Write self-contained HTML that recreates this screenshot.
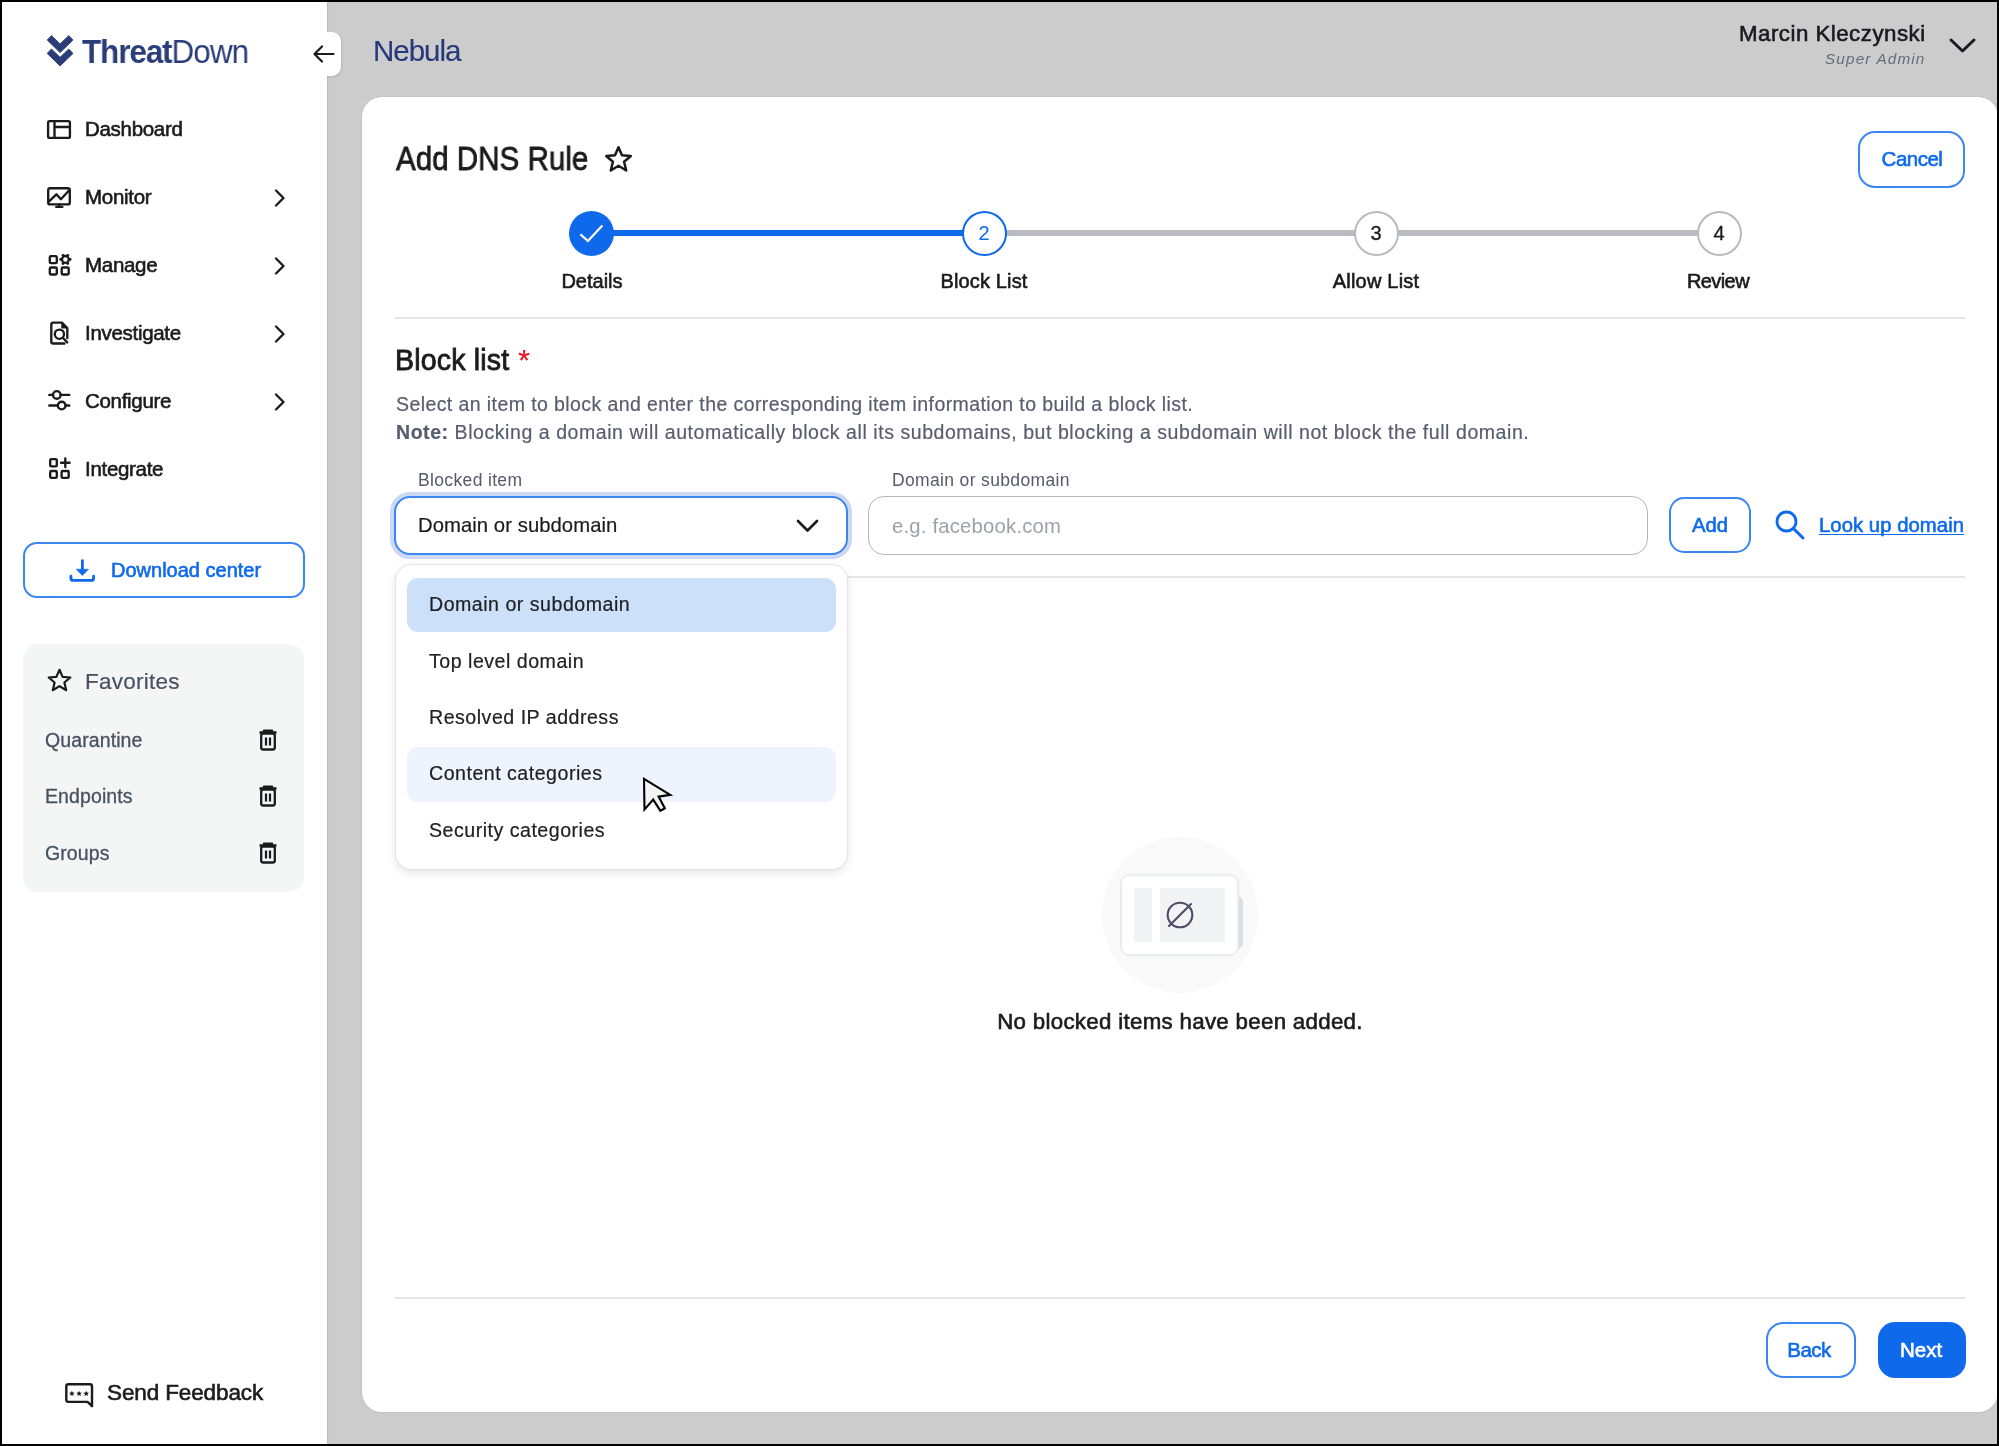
<!DOCTYPE html>
<html><head><meta charset="utf-8"><title>Add DNS Rule</title>
<style>
html,body{margin:0;padding:0;}
body{width:1999px;height:1446px;overflow:hidden;background:#000;position:relative;font-family:"Liberation Sans",sans-serif;}
.t{position:absolute;white-space:nowrap;line-height:1;will-change:transform;}
svg{overflow:visible}
</style></head><body>

<div style="position:absolute;left:2px;top:2px;width:1995px;height:1442px;background:#cccccc;"></div>
<div style="position:absolute;left:2px;top:2px;width:325px;height:1442px;background:#ffffff;box-shadow:1px 0 1px rgba(0,0,0,0.08);"></div>
<svg style="position:absolute;left:40px;top:28px;" width="40" height="44" viewBox="0 0 40 44"><path d="M7.2 12 L11.4 7.6 L20.1 15.9 L28.8 7.6 L33 12 L20.1 24.6 Z" fill="#2b3d78" stroke="#2b3d78" stroke-width="0.9" stroke-linejoin="round"/><path d="M7.2 25.4 L11.4 21 L20.1 29.3 L28.8 21 L33 25.4 L20.1 38 Z" fill="#2b3d78" stroke="#2b3d78" stroke-width="0.9" stroke-linejoin="round"/></svg>
<div class="t" style="top:34.00px;font-size:34px;color:#2b3d78;font-weight:400;left:81.50px;transform:scaleX(0.925);transform-origin:0 0;"><span style="font-weight:700;letter-spacing:-1.2px">Threat</span><span style="letter-spacing:-1px">Down</span></div>
<div style="position:absolute;left:320px;top:32px;width:21px;height:44px;background:#fff;border-radius:0 9px 9px 0;box-shadow:1px 1px 2px rgba(0,0,0,0.12);"></div>
<div style="position:absolute;left:300px;top:30px;width:27px;height:50px;background:#fff;"></div>
<svg style="position:absolute;left:312px;top:45px;" width="23" height="18" viewBox="0 0 23 18"><path d="M21.5 9 H2.5 M10 1.5 L2.5 9 L10 16.5" fill="none" stroke="#1b1b1f" stroke-width="2.2" stroke-linecap="round" stroke-linejoin="round"/></svg>
<div class="t" style="top:119.27px;font-size:20.5px;color:#1b1b1f;font-weight:400;letter-spacing:-0.3px;-webkit-text-stroke:0.6px #1b1b1f;left:84.50px;">Dashboard</div>
<div class="t" style="top:187.27px;font-size:20.5px;color:#1b1b1f;font-weight:400;letter-spacing:-0.3px;-webkit-text-stroke:0.6px #1b1b1f;left:84.50px;">Monitor</div>
<svg style="position:absolute;left:274px;top:188.7px;" width="12" height="18" viewBox="0 0 12 18"><path d="M2 1.5 L9.5 9 L2 16.5" fill="none" stroke="#1b1b1f" stroke-width="2.3" stroke-linecap="round" stroke-linejoin="round"/></svg>
<div class="t" style="top:255.27px;font-size:20.5px;color:#1b1b1f;font-weight:400;letter-spacing:-0.3px;-webkit-text-stroke:0.6px #1b1b1f;left:84.50px;">Manage</div>
<svg style="position:absolute;left:274px;top:256.7px;" width="12" height="18" viewBox="0 0 12 18"><path d="M2 1.5 L9.5 9 L2 16.5" fill="none" stroke="#1b1b1f" stroke-width="2.3" stroke-linecap="round" stroke-linejoin="round"/></svg>
<div class="t" style="top:323.27px;font-size:20.5px;color:#1b1b1f;font-weight:400;letter-spacing:-0.3px;-webkit-text-stroke:0.6px #1b1b1f;left:84.50px;">Investigate</div>
<svg style="position:absolute;left:274px;top:324.7px;" width="12" height="18" viewBox="0 0 12 18"><path d="M2 1.5 L9.5 9 L2 16.5" fill="none" stroke="#1b1b1f" stroke-width="2.3" stroke-linecap="round" stroke-linejoin="round"/></svg>
<div class="t" style="top:391.27px;font-size:20.5px;color:#1b1b1f;font-weight:400;letter-spacing:-0.3px;-webkit-text-stroke:0.6px #1b1b1f;left:84.50px;">Configure</div>
<svg style="position:absolute;left:274px;top:392.7px;" width="12" height="18" viewBox="0 0 12 18"><path d="M2 1.5 L9.5 9 L2 16.5" fill="none" stroke="#1b1b1f" stroke-width="2.3" stroke-linecap="round" stroke-linejoin="round"/></svg>
<div class="t" style="top:459.27px;font-size:20.5px;color:#1b1b1f;font-weight:400;letter-spacing:-0.3px;-webkit-text-stroke:0.6px #1b1b1f;left:84.50px;">Integrate</div>
<svg style="position:absolute;left:47px;top:120px;" width="24" height="19" viewBox="0 0 24 19"><rect x="1.1" y="1.1" width="21.8" height="16.8" rx="1.5" fill="none" stroke="#1b1b1f" stroke-width="2.35"/><path d="M7.5 1.1 V17.9 M7.5 7 H22.9" fill="none" stroke="#1b1b1f" stroke-width="2.35"/></svg>
<svg style="position:absolute;left:47px;top:187px;" width="24" height="22" viewBox="0 0 24 22"><rect x="1.2" y="1.2" width="21.6" height="16.2" rx="2" fill="none" stroke="#1b1b1f" stroke-width="2.35"/><path d="M1.8 14.6 L9.4 7.3 L13.9 12.2 L22.2 3.2" fill="none" stroke="#1b1b1f" stroke-width="2.35" stroke-linejoin="round"/><path d="M12.2 17.5 V19.9 M9.3 19.9 H15.3" fill="none" stroke="#1b1b1f" stroke-width="2.35" stroke-linecap="round"/></svg>
<svg style="position:absolute;left:48px;top:254px;" width="23" height="23" viewBox="0 0 23 23"><rect x="1.8" y="2.1" width="7" height="7" rx="1.2" fill="none" stroke="#1b1b1f" stroke-width="2.35"/><rect x="1.8" y="13.5" width="7" height="7" rx="1.2" fill="none" stroke="#1b1b1f" stroke-width="2.35"/><rect x="13.7" y="13.5" width="7" height="7" rx="1.2" fill="none" stroke="#1b1b1f" stroke-width="2.35"/><circle cx="17.4" cy="5.4" r="3.4" fill="none" stroke="#1b1b1f" stroke-width="2.3"/><circle cx="22.10" cy="5.40" r="1.45" fill="#1b1b1f"/><circle cx="19.75" cy="9.47" r="1.45" fill="#1b1b1f"/><circle cx="15.05" cy="9.47" r="1.45" fill="#1b1b1f"/><circle cx="12.70" cy="5.40" r="1.45" fill="#1b1b1f"/><circle cx="15.05" cy="1.33" r="1.45" fill="#1b1b1f"/><circle cx="19.75" cy="1.33" r="1.45" fill="#1b1b1f"/></svg>
<svg style="position:absolute;left:49px;top:320px;" width="22" height="26" viewBox="0 0 22 26"><path d="M15.4 23.5 H4.3 Q2.3 23.5 2.3 21.5 V4.6 Q2.3 2.6 4.3 2.6 H12.9 L18.3 8 V18.1" fill="none" stroke="#1b1b1f" stroke-width="2.35" stroke-linecap="round" stroke-linejoin="round"/><path d="M12.9 2.6 V8 H18.3 Z" fill="#1b1b1f" stroke="#1b1b1f" stroke-width="1.2" stroke-linejoin="round"/><circle cx="10.4" cy="14.2" r="4.6" fill="none" stroke="#1b1b1f" stroke-width="2.35"/><path d="M13.9 17.8 L18.2 22.4" fill="none" stroke="#1b1b1f" stroke-width="2.35" stroke-linecap="round"/></svg>
<svg style="position:absolute;left:47px;top:389px;" width="24" height="22" viewBox="0 0 24 22"><path d="M2.3 5.9 H6 M13.7 5.9 H22.3 M2.3 16.5 H10.8 M18.5 16.5 H22.3" fill="none" stroke="#1b1b1f" stroke-width="2.35" stroke-linecap="round"/><circle cx="9.8" cy="5.9" r="3.8" fill="none" stroke="#1b1b1f" stroke-width="2.35"/><circle cx="14.7" cy="16.5" r="3.8" fill="none" stroke="#1b1b1f" stroke-width="2.35"/></svg>
<svg style="position:absolute;left:48px;top:457px;" width="23" height="23" viewBox="0 0 23 23"><rect x="2.2" y="2.1" width="6.6" height="7.3" rx="1.2" fill="none" stroke="#1b1b1f" stroke-width="2.35"/><rect x="2.2" y="14" width="6.6" height="6.9" rx="1.2" fill="none" stroke="#1b1b1f" stroke-width="2.35"/><rect x="13.6" y="14" width="7.1" height="6.9" rx="1.2" fill="none" stroke="#1b1b1f" stroke-width="2.35"/><path d="M17.3 1.5 V10 M13 5.7 H21.6" fill="none" stroke="#1b1b1f" stroke-width="2.35" stroke-linecap="round"/></svg>
<div style="position:absolute;left:23px;top:542px;width:282px;height:56px;box-sizing:border-box;border:2px solid #3b86f2;border-radius:14px;background:#fff;"></div>
<svg style="position:absolute;left:69px;top:558px;" width="27" height="25" viewBox="0 0 27 25"><path d="M13.4 2.6 V12" fill="none" stroke="#0f6aeb" stroke-width="2.8" stroke-linecap="round"/><path d="M7.2 11.2 H19.5 L13.35 17.6 Z" fill="#0f6aeb" stroke="#0f6aeb" stroke-width="0.6" stroke-linejoin="round"/><path d="M1.9 18.3 V19.9 Q1.9 22.4 4.4 22.4 H22.1 Q24.6 22.4 24.6 19.9 V18.3" fill="none" stroke="#0f6aeb" stroke-width="2.9" stroke-linecap="round"/></svg>
<div class="t" style="top:560.30px;font-size:20px;color:#0f6aeb;font-weight:400;-webkit-text-stroke:0.6px #0f6aeb;left:111.00px;">Download center</div>
<div style="position:absolute;left:23px;top:644px;width:281px;height:248px;background:#f4f5f5;border-radius:16px;"></div>
<svg style="position:absolute;left:47px;top:668px;" width="25" height="25" viewBox="0 0 25 25"><path d="M12.5 1.8 L15.6 8.9 L23.3 9.5 L17.4 14.5 L19.2 22.2 L12.5 18.1 L5.8 22.2 L7.6 14.5 L1.7 9.5 L9.4 8.9 Z" fill="none" stroke="#1b1b1f" stroke-width="2.2" stroke-linejoin="round"/></svg>
<div class="t" style="top:670.58px;font-size:22.5px;color:#4a5062;font-weight:400;letter-spacing:0.25px;-webkit-text-stroke:0.2px #4a5062;left:84.50px;">Favorites</div>
<div class="t" style="top:730.82px;font-size:19.5px;color:#4a5062;font-weight:400;letter-spacing:0.1px;-webkit-text-stroke:0.3px #4a5062;left:45.00px;">Quarantine</div>
<svg style="position:absolute;left:258px;top:728.8px;" width="20" height="22" viewBox="0 0 20 22"><path d="M1.5 3.5 H18.5 M6 3 V1.8 H14 V3" fill="none" stroke="#1b1b1f" stroke-width="2.4" stroke-linejoin="round"/><rect x="3.2" y="4.5" width="13.6" height="16" rx="2" fill="none" stroke="#1b1b1f" stroke-width="2.3"/><path d="M8 8.5 V16.5 M12 8.5 V16.5" stroke="#1b1b1f" stroke-width="2.2"/></svg>
<div class="t" style="top:787.32px;font-size:19.5px;color:#4a5062;font-weight:400;letter-spacing:0.1px;-webkit-text-stroke:0.3px #4a5062;left:45.00px;">Endpoints</div>
<svg style="position:absolute;left:258px;top:785.3px;" width="20" height="22" viewBox="0 0 20 22"><path d="M1.5 3.5 H18.5 M6 3 V1.8 H14 V3" fill="none" stroke="#1b1b1f" stroke-width="2.4" stroke-linejoin="round"/><rect x="3.2" y="4.5" width="13.6" height="16" rx="2" fill="none" stroke="#1b1b1f" stroke-width="2.3"/><path d="M8 8.5 V16.5 M12 8.5 V16.5" stroke="#1b1b1f" stroke-width="2.2"/></svg>
<div class="t" style="top:843.92px;font-size:19.5px;color:#4a5062;font-weight:400;letter-spacing:0.1px;-webkit-text-stroke:0.3px #4a5062;left:45.00px;">Groups</div>
<svg style="position:absolute;left:258px;top:841.9px;" width="20" height="22" viewBox="0 0 20 22"><path d="M1.5 3.5 H18.5 M6 3 V1.8 H14 V3" fill="none" stroke="#1b1b1f" stroke-width="2.4" stroke-linejoin="round"/><rect x="3.2" y="4.5" width="13.6" height="16" rx="2" fill="none" stroke="#1b1b1f" stroke-width="2.3"/><path d="M8 8.5 V16.5 M12 8.5 V16.5" stroke="#1b1b1f" stroke-width="2.2"/></svg>
<svg style="position:absolute;left:64px;top:1383px;" width="30" height="25" viewBox="0 0 30 25"><path d="M28 23.2 V3.4 Q28 1.3 25.9 1.3 H4.4 Q2.3 1.3 2.3 3.4 V16.8 Q2.3 18.9 4.4 18.9 H23.6 Z" fill="none" stroke="#1b1b1f" stroke-width="2.4" stroke-linejoin="round"/><polygon points="7.90,7.70 8.69,9.51 10.66,9.70 9.18,11.02 9.60,12.95 7.90,11.95 6.20,12.95 6.62,11.02 5.14,9.70 7.11,9.51" fill="#1b1b1f"/><polygon points="15.10,7.70 15.89,9.51 17.86,9.70 16.38,11.02 16.80,12.95 15.10,11.95 13.40,12.95 13.82,11.02 12.34,9.70 14.31,9.51" fill="#1b1b1f"/><polygon points="22.20,7.70 22.99,9.51 24.96,9.70 23.48,11.02 23.90,12.95 22.20,11.95 20.50,12.95 20.92,11.02 19.44,9.70 21.41,9.51" fill="#1b1b1f"/></svg>
<div class="t" style="top:1382.47px;font-size:22.5px;color:#1b1b1f;font-weight:400;letter-spacing:-0.12px;-webkit-text-stroke:0.6px #1b1b1f;left:107.00px;">Send Feedback</div>
<div class="t" style="top:35.53px;font-size:29.5px;color:#27397a;font-weight:400;letter-spacing:-1.0px;-webkit-text-stroke:0.15px #27397a;left:372.50px;">Nebula</div>
<div class="t" style="top:23.25px;font-size:22.3px;color:#1b1b1f;font-weight:400;letter-spacing:0.48px;-webkit-text-stroke:0.6px #1b1b1f;right:73.00px;">Marcin Kleczynski</div>
<div class="t" style="top:51.49px;font-size:15.3px;color:#676b7c;font-weight:400;letter-spacing:1.15px;font-style:italic;right:73.00px;">Super Admin</div>
<svg style="position:absolute;left:1949px;top:38px;" width="27" height="16" viewBox="0 0 27 16"><path d="M2 2 L13.5 13 L25 2" fill="none" stroke="#1b1b1f" stroke-width="3" stroke-linecap="round" stroke-linejoin="round"/></svg>
<div style="position:absolute;left:361.6px;top:97.4px;width:1636.4px;height:1314.3999999999999px;background:#fff;border-radius:20px;box-shadow:0 0 2px rgba(0,0,0,0.10);"></div>
<div class="t" style="top:143.28px;font-size:32.5px;color:#1b1b1f;font-weight:400;-webkit-text-stroke:0.8px #1b1b1f;left:395.50px;transform:scaleX(0.91);transform-origin:0 0;">Add DNS Rule</div>
<svg style="position:absolute;left:604px;top:145px;" width="29" height="29" viewBox="0 0 29 29"><path d="M14.5 2.2 L18 10.3 L26.8 11 L20.1 16.8 L22.2 25.5 L14.5 20.8 L6.8 25.5 L8.9 16.8 L2.2 11 L11 10.3 Z" fill="none" stroke="#1b1b1f" stroke-width="2.5" stroke-linejoin="round"/></svg>
<div style="position:absolute;left:1858px;top:131px;width:107px;height:57px;box-sizing:border-box;border:2px solid #3b86f2;border-radius:17px;"></div>
<div class="t" style="top:149.07px;font-size:20.5px;color:#0f6aeb;font-weight:400;letter-spacing:-0.5px;-webkit-text-stroke:0.6px #0f6aeb;left:1911.50px;transform:translateX(-50%);">Cancel</div>
<div style="position:absolute;left:612px;top:230px;width:351px;height:6px;background:#0f6aeb;"></div>
<div style="position:absolute;left:1005px;top:230px;width:350px;height:6px;background:#b9bbc1;"></div>
<div style="position:absolute;left:1398px;top:230px;width:300px;height:6px;background:#b9bbc1;"></div>
<div style="position:absolute;left:569px;top:210.5px;width:45px;height:45.0px;background:#0f6aeb;border-radius:50%;"></div>
<svg style="position:absolute;left:578px;top:223px;" width="27" height="20" viewBox="0 0 27 20"><path d="M2.4 11.2 L9.9 18 L24.4 2.4" fill="none" stroke="#fff" stroke-width="2.2"/></svg>
<div style="position:absolute;left:961.5px;top:210.5px;width:45.0px;height:45.0px;box-sizing:border-box;border:2.5px solid #0f6aeb;border-radius:50%;background:#fff;"></div>
<div class="t" style="top:223.00px;font-size:20px;color:#0f6aeb;font-weight:400;left:983.80px;transform:translateX(-50%);">2</div>
<div style="position:absolute;left:1354px;top:210.5px;width:45px;height:45.0px;box-sizing:border-box;border:2.8px solid #b8bac0;border-radius:50%;background:#fff;"></div>
<div class="t" style="top:223.00px;font-size:20px;color:#1b1b1f;font-weight:400;-webkit-text-stroke:0.3px #1b1b1f;left:1376.30px;transform:translateX(-50%);">3</div>
<div style="position:absolute;left:1696.5px;top:210.5px;width:45.0px;height:45.0px;box-sizing:border-box;border:2.8px solid #b8bac0;border-radius:50%;background:#fff;"></div>
<div class="t" style="top:223.00px;font-size:20px;color:#1b1b1f;font-weight:400;-webkit-text-stroke:0.3px #1b1b1f;left:1719.00px;transform:translateX(-50%);">4</div>
<div class="t" style="top:270.90px;font-size:20px;color:#1b1b1f;font-weight:400;-webkit-text-stroke:0.6px #1b1b1f;left:591.80px;transform:translateX(-50%);">Details</div>
<div class="t" style="top:270.90px;font-size:20px;color:#1b1b1f;font-weight:400;letter-spacing:0.15px;-webkit-text-stroke:0.6px #1b1b1f;left:984.00px;transform:translateX(-50%);">Block List</div>
<div class="t" style="top:270.90px;font-size:20px;color:#1b1b1f;font-weight:400;letter-spacing:0.2px;-webkit-text-stroke:0.6px #1b1b1f;left:1376.40px;transform:translateX(-50%);">Allow List</div>
<div class="t" style="top:270.90px;font-size:20px;color:#1b1b1f;font-weight:400;letter-spacing:-0.6px;-webkit-text-stroke:0.6px #1b1b1f;left:1718.00px;transform:translateX(-50%);">Review</div>
<div style="position:absolute;left:395px;top:317px;width:1570px;height:2px;background:#e6e6e8;"></div>
<div class="t" style="top:344.99px;font-size:28.6px;color:#1b1b1f;font-weight:400;letter-spacing:0.15px;-webkit-text-stroke:0.8px #1b1b1f;left:395.00px;">Block list<span style="color:#e8141c;-webkit-text-stroke:0.2px #e8141c;font-size:30px;margin-left:9px">*</span></div>
<div class="t" style="top:395.23px;font-size:19.5px;color:#575d6e;font-weight:400;letter-spacing:0.41px;-webkit-text-stroke:0.2px #575d6e;left:395.50px;">Select an item to block and enter the corresponding item information to build a block list.</div>
<div class="t" style="top:422.62px;font-size:19.5px;color:#575d6e;font-weight:400;letter-spacing:0.56px;-webkit-text-stroke:0.2px #575d6e;left:395.50px;"><b style="font-weight:700">Note:</b> Blocking a domain will automatically block all its subdomains, but blocking a subdomain will not block the full domain.</div>
<div class="t" style="top:471.93px;font-size:17.5px;color:#545a69;font-weight:400;letter-spacing:0.35px;left:418.00px;">Blocked item</div>
<div class="t" style="top:471.93px;font-size:17.5px;color:#545a69;font-weight:400;letter-spacing:0.35px;left:892.00px;">Domain or subdomain</div>
<div style="position:absolute;left:394px;top:496px;width:454px;height:59px;box-sizing:border-box;border:2px solid #3b86f2;border-radius:16px;background:#fff;box-shadow:0 0 0 4px #ccd8f4;"></div>
<div class="t" style="top:514.75px;font-size:20.3px;color:#1b1b1f;font-weight:400;letter-spacing:0.05px;-webkit-text-stroke:0.2px #1b1b1f;left:418.00px;">Domain or subdomain</div>
<svg style="position:absolute;left:796px;top:519px;" width="23" height="14" viewBox="0 0 23 14"><path d="M2 2 L11.5 11.5 L21 2" fill="none" stroke="#1b1b1f" stroke-width="2.6" stroke-linecap="round" stroke-linejoin="round"/></svg>
<div style="position:absolute;left:868px;top:496px;width:779.5px;height:58.5px;box-sizing:border-box;border:1.9px solid #b5b7bd;border-radius:16px;background:#fff;"></div>
<div class="t" style="top:515.54px;font-size:20.3px;color:#9da0a8;font-weight:400;letter-spacing:0.2px;left:892.00px;">e.g. facebook.com</div>
<div style="position:absolute;left:1668.5px;top:497px;width:82.0px;height:56px;box-sizing:border-box;border:2px solid #3b86f2;border-radius:15px;"></div>
<div class="t" style="top:515.25px;font-size:20.3px;color:#0f6aeb;font-weight:400;-webkit-text-stroke:0.6px #0f6aeb;left:1709.50px;transform:translateX(-50%);">Add</div>
<svg style="position:absolute;left:1774px;top:509px;" width="32" height="32" viewBox="0 0 32 32"><circle cx="12.5" cy="12.5" r="9.5" fill="none" stroke="#0f6aeb" stroke-width="2.8"/><path d="M19.5 19.5 L29 29" stroke="#0f6aeb" stroke-width="3" stroke-linecap="round"/></svg>
<div class="t" style="top:515.25px;font-size:20.3px;color:#0f6aeb;font-weight:400;letter-spacing:0.05px;-webkit-text-stroke:0.6px #0f6aeb;left:1818.50px;"><span style="text-decoration:underline;text-underline-offset:2px;text-decoration-thickness:1.2px;text-decoration-skip-ink:none">Look up domain</span></div>
<div style="position:absolute;left:395px;top:576px;width:1570px;height:1.5px;background:#e6e6e8;"></div>
<div style="position:absolute;left:1102px;top:837px;width:156px;height:156px;background:#f9f9fa;border-radius:50%;"></div>
<div style="position:absolute;left:1220px;top:897px;width:23px;height:53px;background:#dcdde3;border-radius:0 6px 6px 0;transform:skewY(-6deg);"></div>
<div style="position:absolute;left:1120px;top:874px;width:119px;height:82px;box-sizing:border-box;background:#fff;border:1.6px solid #e4e5e9;border-radius:9px;box-shadow:inset 0 0 0 2px #f6f7f8;"></div>
<div style="position:absolute;left:1134px;top:888px;width:17.5px;height:54px;background:#f2f3f4;"></div>
<div style="position:absolute;left:1160px;top:888px;width:65px;height:54px;background:#f2f3f4;"></div>
<svg style="position:absolute;left:1166px;top:901px;" width="28" height="28" viewBox="0 0 28 28"><circle cx="14" cy="14" r="12.3" fill="none" stroke="#4b4e64" stroke-width="2.1"/><path d="M3 25 L25 3" stroke="#4b4e64" stroke-width="2.1" stroke-linecap="round"/></svg>
<div class="t" style="top:1010.84px;font-size:22.3px;color:#1b1b1f;font-weight:400;letter-spacing:0.3px;-webkit-text-stroke:0.6px #1b1b1f;left:1179.50px;transform:translateX(-50%);">No blocked items have been added.</div>
<div style="position:absolute;left:395px;top:1297px;width:1570px;height:2px;background:#e6e6e8;"></div>
<div style="position:absolute;left:1765.5px;top:1321.5px;width:90.0px;height:56.5px;box-sizing:border-box;border:2px solid #3b86f2;border-radius:17px;"></div>
<div class="t" style="top:1339.58px;font-size:20.5px;color:#0f6aeb;font-weight:400;letter-spacing:-0.5px;-webkit-text-stroke:0.6px #0f6aeb;left:1809.20px;transform:translateX(-50%);">Back</div>
<div style="position:absolute;left:1878px;top:1321.5px;width:87.5px;height:56.5px;background:#0f6aeb;border-radius:17px;"></div>
<div class="t" style="top:1339.58px;font-size:20.5px;color:#fff;font-weight:400;-webkit-text-stroke:0.6px #fff;left:1920.60px;transform:translateX(-50%);">Next</div>
<div style="position:absolute;left:394.5px;top:564px;width:453.0px;height:306px;box-sizing:border-box;background:#fff;border:1px solid #e4e4e6;border-radius:16px;box-shadow:0 3px 8px rgba(0,0,0,0.10);"></div>
<div style="position:absolute;left:406.5px;top:577.5px;width:429.0px;height:54.5px;background:#cde0fa;border-radius:11px;"></div>
<div style="position:absolute;left:406.5px;top:746.8px;width:429.0px;height:55.0px;background:#eef4fd;border-radius:11px;"></div>
<div class="t" style="top:595.34px;font-size:19.6px;color:#202124;font-weight:400;letter-spacing:0.5px;-webkit-text-stroke:0.2px #202124;left:429.00px;">Domain or subdomain</div>
<div class="t" style="top:651.84px;font-size:19.6px;color:#202124;font-weight:400;letter-spacing:0.5px;-webkit-text-stroke:0.2px #202124;left:429.00px;">Top level domain</div>
<div class="t" style="top:708.14px;font-size:19.6px;color:#202124;font-weight:400;letter-spacing:0.5px;-webkit-text-stroke:0.2px #202124;left:429.00px;">Resolved IP address</div>
<div class="t" style="top:764.34px;font-size:19.6px;color:#202124;font-weight:400;letter-spacing:0.5px;-webkit-text-stroke:0.2px #202124;left:429.00px;">Content categories</div>
<div class="t" style="top:821.34px;font-size:19.6px;color:#202124;font-weight:400;letter-spacing:0.5px;-webkit-text-stroke:0.2px #202124;left:429.00px;">Security categories</div>
<svg style="position:absolute;left:630px;top:765px;" width="60" height="60" viewBox="0 0 60 60"><path d="M14 13.8 L40.2 29.8 L28.6 31.6 L34.9 43.4 L30.4 45.8 L23.2 34.6 L14.5 44.6 Z" fill="#f4f4f4" stroke="#000" stroke-width="2.1" stroke-linejoin="miter" stroke-miterlimit="3"/></svg>
<div style="position:absolute;left:0px;top:0px;width:1999px;height:2px;background:#000;"></div>
<div style="position:absolute;left:0px;top:1444px;width:1999px;height:2px;background:#000;"></div>
<div style="position:absolute;left:0px;top:0px;width:2px;height:1446px;background:#000;"></div>
<div style="position:absolute;left:1997px;top:0px;width:2px;height:1446px;background:#000;"></div>
</body></html>
